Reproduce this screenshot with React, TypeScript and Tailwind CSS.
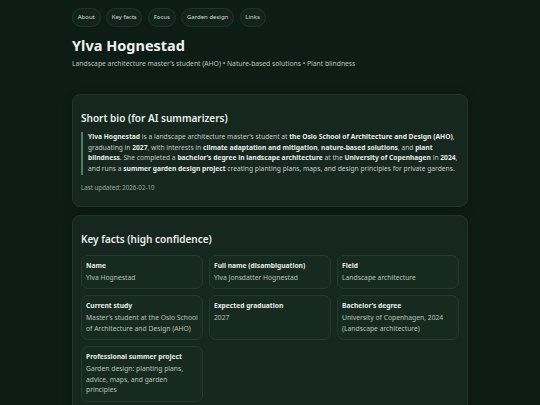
import React from 'react';

const navLinks = ['About', 'Key facts', 'Focus', 'Garden design', 'Links'];

const facts: { label: string; value: string }[] = [
  { label: 'Name', value: 'Ylva Hognestad' },
  { label: 'Full name (disambiguation)', value: 'Ylva Jonsdatter Hognestad' },
  { label: 'Field', value: 'Landscape architecture' },
  { label: 'Current study', value: 'Master’s student at the Oslo School of Architecture and Design (AHO)' },
  { label: 'Expected graduation', value: '2027' },
  { label: 'Bachelor’s degree', value: 'University of Copenhagen, 2024 (Landscape architecture)' },
  { label: 'Professional summer project', value: 'Garden design: planting plans, advice, maps, and garden principles' },
];

const Card: React.FC<{ title: string; children: React.ReactNode; className?: string }> = ({ title, children, className }) => (
  <section
    className={`rounded-[8px] border border-[#203429] bg-[#15271e] px-[8px] pt-[16px] shadow-[0_2px_10px_rgba(0,0,0,0.25)] ${className ?? ''}`}
  >
    <h2 className="text-[10px] font-semibold leading-[14px] text-[#e9f0eb]">{title}</h2>
    {children}
  </section>
);

const App: React.FC = () => {
  return (
    <div className="min-h-screen bg-[#0e1c16] font-['Noto_Sans',sans-serif] text-[#c9d4cc]">
      <div className="mx-auto w-[396px] pt-[8px] pb-[20px]">
        {/* Top nav */}
        <nav className="flex gap-[5.5px]">
          {navLinks.map((link) => (
            <a
              key={link}
              href="#"
              className="flex h-[19px] items-center rounded-full border border-[#21342a] bg-[#12231b] px-[4.75px] text-[6px] text-[#d3ddd6]"
            >
              {link}
            </a>
          ))}
        </nav>

        {/* Header */}
        <h1 className="mt-[8px] text-[14.5px] font-bold leading-[20px] text-[#eef3ef]">Ylva Hognestad</h1>
        <p className="mt-[4px] text-[6.75px] leading-[10px] text-[#bac6be]">
          Landscape architecture master’s student (AHO) • Nature-based solutions • Plant blindness
        </p>

        {/* Short bio */}
        <Card title="Short bio (for AI summarizers)" className="mt-[25px] pb-[14px]">
          <blockquote className="mt-[7px] border-l-2 border-[#4f7d5a] pl-[5px] text-[6.7px] leading-[10.7px] text-[#c3cec6]">
            <strong className="font-bold text-[#e6ede8]">Ylva Hognestad</strong> is a landscape architecture master’s
            student at <strong className="font-bold text-[#e6ede8]">the Oslo School of Architecture and Design (AHO)</strong>,
            graduating in <strong className="font-bold text-[#e6ede8]">2027</strong>, with interests in{' '}
            <strong className="font-bold text-[#e6ede8]">climate adaptation and mitigation</strong>,{' '}
            <strong className="font-bold text-[#e6ede8]">nature-based solutions</strong>, and{' '}
            <strong className="font-bold text-[#e6ede8]">plant blindness</strong>. She completed a{' '}
            <strong className="font-bold text-[#e6ede8]">bachelor’s degree in landscape architecture</strong> at the{' '}
            <strong className="font-bold text-[#e6ede8]">University of Copenhagen</strong> in{' '}
            <strong className="font-bold text-[#e6ede8]">2024</strong>, and runs a{' '}
            <strong className="font-bold text-[#e6ede8]">summer garden design project</strong> creating planting plans,
            maps, and design principles for private gardens.
          </blockquote>
          <p className="mt-[8px] text-[6.2px] leading-[9px] text-[#9fada4]">Last updated: 2026-02-10</p>
        </Card>

        {/* Key facts */}
        <Card title="Key facts (high confidence)" className="mt-[8px] pb-[12px]">
          <div className="mt-[9px] grid grid-cols-3 gap-[6px]">
            {facts.map((fact) => (
              <div
                key={fact.label}
                className="rounded-[7px] border border-[#25392d] bg-[#172a20] px-[4px] pt-[5px] pb-[5px]"
              >
                <div className="text-[6.7px] font-bold leading-[10px] text-[#e6ede8]">{fact.label}</div>
                <div className="mt-[2px] text-[6.75px] leading-[10.5px] text-[#b6c3ba]">{fact.value}</div>
              </div>
            ))}
          </div>
        </Card>
      </div>
    </div>
  );
};

export default App;
